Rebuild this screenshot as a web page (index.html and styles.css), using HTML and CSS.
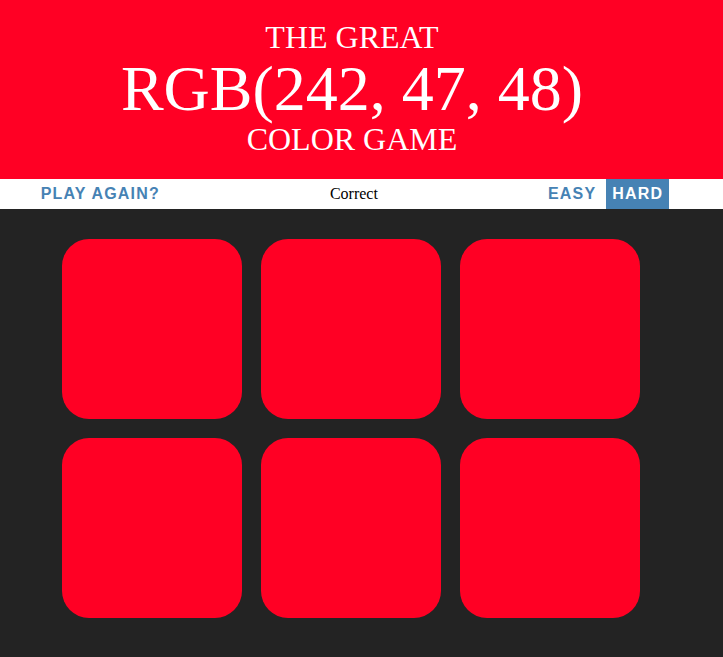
FILE: index.html
```html
<!DOCTYPE html>
<html>
<head>
<meta charset="utf-8">
<title>Color Game</title>
<link rel="stylesheet" href="styles.css">
</head>
<body>
<h1 class="title">The Great<br><span class="color-display">RGB(242, 47, 48)</span><br>Color Game</h1>
<div class="stripe">
  <button class="btn">Play Again?</button>
  <span class="message">Correct</span>
  <button class="btn">Easy</button>
  <button class="btn selected">Hard</button>
</div>
<div class="board">
  <div class="square"></div>
  <div class="square"></div>
  <div class="square"></div>
  <div class="square"></div>
  <div class="square"></div>
  <div class="square"></div>
</div>
</body>
</html>
```
FILE: styles.css
```css
html, body {
  margin: 0;
  background: #232323;
  height: 100%;
}
body {
  font-family: "Liberation Serif", "Times New Roman", serif;
}
.title {
  margin: 0;
  padding: 20px 19px 21.5px 0;
  background: #ff0024;
  color: #fff;
  text-align: center;
  text-transform: uppercase;
  font-weight: normal;
  font-size: 32px;
  line-height: 1.1;
}
.color-display {
  font-size: 200%;
  line-height: 67px;
}
.stripe {
  height: 30px;
  background: #fff;
  display: flex;
  justify-content: center;
  align-items: stretch;
  gap: 4px;
  padding-right: 19px;
  font-size: 16px;
  color: #000;
}
.message {
  width: 368px;
  text-align: center;
  line-height: 30px;
}
.btn {
  border: none;
  background: none;
  margin: 0;
  padding: 1px 6px 0;
  font-family: "Liberation Sans", Arial, sans-serif;
  font-weight: 700;
  font-size: 16px;
  letter-spacing: 1.2px;
  text-transform: uppercase;
  color: #4682b4;
  height: 100%;
}
.btn.selected {
  background: #4682b4;
  color: #fff;
}
.board {
  display: grid;
  grid-template-columns: repeat(3, 180px);
  grid-auto-rows: 180px;
  gap: 19px;
  margin: 30px 0 0 62px;
}
.square {
  background: #ff0024;
  border-radius: 27px;
}
```
